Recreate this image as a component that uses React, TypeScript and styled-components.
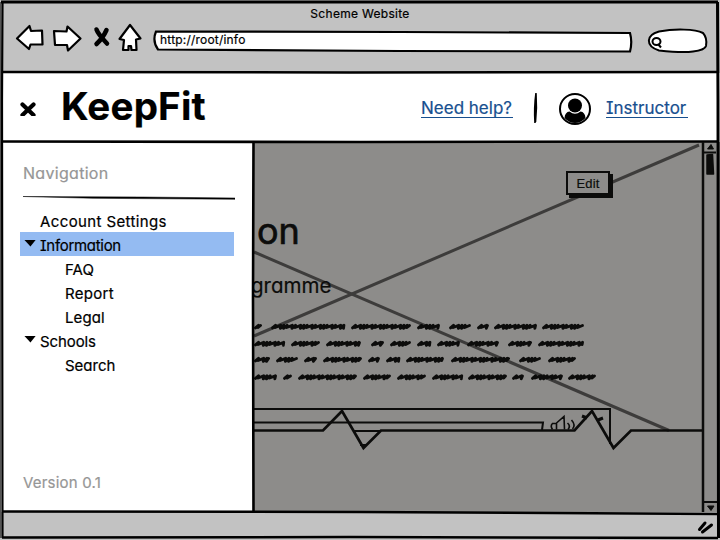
import React from "react";
import styled, { createGlobalStyle } from "styled-components";

const ink = "#000";
const dimInk = "#0c0c0b";

const GlobalStyle = createGlobalStyle`
  * { box-sizing: border-box; }
  body {
    margin: 0;
    background: #fff;
    overflow: hidden;
    font-family: Inter, "Liberation Sans", sans-serif;
    font-feature-settings: "cv11" 1, "cv08" 1;
    color: ${ink};
    -webkit-text-stroke: 0.2px currentColor;
  }
`;

const Window = styled.div`
  position: relative;
  width: 720px;
  height: 540px;
  display: flex;
  flex-direction: column;
  background: #fff;
  overflow: hidden;
`;

const Outline = styled.svg`
  position: absolute;
  inset: 0;
  pointer-events: none;
`;

const Chrome = styled.header`
  height: 73px;
  padding: 6px 3px 0;
  background: #c2c2c2;
`;

const Title = styled.div`
  height: 16px;
  line-height: 16px;
  font-size: 12px;
  letter-spacing: 0.3px;
  text-align: center;
`;

const Controls = styled.div`
  display: flex;
  height: 36px;
  padding-left: 9px;
`;

const Address = styled.div`
  position: relative;
  width: 482px;
  height: 26px;
  margin: 5px 0 0 4px;
`;

const Url = styled.span`
  position: relative;
  display: block;
  padding-left: 8px;
  line-height: 26px;
  font-size: 12px;
  letter-spacing: 0.2px;
`;

const SearchField = styled.svg`
  margin: 5px 0 0 11px;
`;

const AppBar = styled.div`
  height: 69px;
  padding: 0 32px 0 20px;
  display: flex;
  align-items: center;
  background: #fff;
`;

const Logo = styled.h1`
  margin: -3px auto 0 24px;
  line-height: 50px;
  font-size: 38.5px;
  font-weight: 700;
  letter-spacing: 0.2px;
`;

const Link = styled.a<{ $width: number }>`
  width: ${(p) => p.$width}px;
  height: 20px;
  line-height: 20px;
  border-bottom: 1px solid #174f8f;
  color: #174f8f;
  font-size: 17px;
  white-space: nowrap;
`;

const Divider = styled.svg`
  margin: 0 18px 0 17px;
`;

const Avatar = styled.svg`
  margin: 2px 15px 0 0;
`;

const Main = styled.div`
  display: flex;
  height: 370px;
`;

const Drawer = styled.nav`
  width: 254px;
  padding: 19px 19px 0 20px;
  display: flex;
  flex-direction: column;
  background: #fff;
`;

const Muted = styled.div<{ $size: number; $spacing: number }>`
  padding-left: 3px;
  height: 24px;
  line-height: 24px;
  font-size: ${(p) => p.$size}px;
  letter-spacing: ${(p) => p.$spacing}px;
  color: #969696;
`;

const Rule = styled.svg`
  margin: 11px 0 8px 3px;
`;

const NavRow = styled.div<{ $child?: boolean; $active?: boolean; $spacing?: number }>`
  height: 24px;
  width: 214px;
  display: flex;
  align-items: center;
  padding-top: 2px;
  padding-left: ${(p) => (p.$child ? 45 : 4)}px;
  background: ${(p) => (p.$active ? "#94bbf2" : "transparent")};
  font-size: 15px;
  letter-spacing: ${(p) => p.$spacing ?? 0}px;
`;

const Caret = styled.span<{ $hidden?: boolean }>`
  width: 12px;
  height: 7px;
  margin: -4px 4px 0 0;
  background: ${(p) => (p.$hidden ? "transparent" : ink)};
  clip-path: polygon(0 0, 100% 0, 54% 100%);
`;

const DrawerFoot = styled.footer`
  margin: auto 0 17px;
`;

const Canvas = styled.main`
  position: relative;
  width: 450px;
  background: #8d8c8a;
  overflow: hidden;
  color: ${dimInk};
`;

const Sketch = styled.svg`
  position: absolute;
  left: 0;
  top: 0;
`;

const CanvasContent = styled.div`
  position: relative;
  display: flex;
  flex-direction: column;
`;

const EditButton = styled.button`
  align-self: flex-end;
  width: 44px;
  height: 24px;
  margin: 29px 94px 0 0;
  padding: 0;
  border: 2px solid ${dimInk};
  background: #8d8c8a;
  box-shadow: 3px 3px 0 ${dimInk};
  color: ${dimInk};
  font: 13px "Liberation Sans", sans-serif;
  letter-spacing: 0.2px;
`;

const Heading = styled.h2`
  margin: 8px 0 0 3px;
  height: 56px;
  line-height: 56px;
  font-size: 36px;
  font-weight: 400;
  -webkit-text-stroke: 0.7px currentColor;
`;

const SubHeading = styled.h3`
  margin: 13px 0 0 -3px;
  height: 28px;
  line-height: 28px;
  font-size: 20.5px;
  font-weight: 400;
`;

const ScrollBar = styled.div`
  width: 16px;
  background: #8d8c8a;
`;

const Status = styled.footer`
  height: 28px;
  padding: 7px 4px 0;
  display: flex;
  justify-content: flex-end;
  background: #c2c2c2;
`;

/* Start and end of each scribbled word, one list per line of copy. */
const scribbles: { y: number; words: [number, number][] }[] = [
  { y: 184.5, words: [[0, 8], [17, 91], [97, 157], [163, 186], [195, 217], [223, 235], [240, 283], [288, 330]] },
  { y: 201.5, words: [[0, 31], [37, 66], [72, 107], [117, 130], [136, 157], [163, 177], [183, 206], [213, 245], [254, 278], [284, 330]] },
  { y: 217.5, words: [[0, 16], [22, 44], [50, 63], [69, 108], [114, 126], [132, 146], [152, 190], [197, 256], [265, 287], [294, 322]] },
  { y: 235, words: [[0, 23], [29, 38], [44, 103], [109, 137], [143, 172], [178, 209], [214, 253], [258, 270], [277, 309], [314, 342]] },
];

function scribble(y: number, from: number, to: number, seed: number) {
  let d = `M${from + 1.5} ${y + 1.4}`;
  let x = from + 2.5;
  let i = seed;
  while (x < to - 3) {
    const long = (i * 7 + seed * 3) % 5 < 2;
    const step = long ? 5.2 : 3.2;
    d += `L${x + 2} ${y - 1.2}L${x + 1.6} ${y + (long ? 1 : 1.8)}`;
    x += step;
    i += 1;
  }
  return d + `L${to - 1.5} ${y - 1}`;
}

const navItems = [
  { label: "Account Settings", caret: false, spacing: 0.38 },
  { label: "Information", caret: true, active: true, spacing: -0.3 },
  { label: "FAQ", child: true, spacing: 0.1 },
  { label: "Report", child: true, spacing: 0.3 },
  { label: "Legal", child: true, spacing: 0.1 },
  { label: "Schools", caret: true, spacing: -0.1 },
  { label: "Search", child: true },
];

function BrowserButtons() {
  return (
    <svg width="136" height="36" viewBox="12 21 136 36" fill="#fff" stroke={ink} strokeWidth="2.2" strokeLinejoin="round" strokeLinecap="round">
      <path d="M17 37.500 29.500 25 31 30 42 29.500 42.500 43.500 30.500 43.500 29 48Z" />
      <path d="M54 30 66.500 30.500 67.500 25.500 80.500 37.500 68 49.500 67 44 55 44Z" />
      <path d="M96.500 28.500Q98 33 107 42.500M106.500 29Q103 37 96.500 43" fill="none" strokeWidth="4.500" />
      <path d="M130 24 140.500 37.500 136 38.500 136.500 49 131.500 49 131 45 128.500 45 128.500 49 123 49 124 39 119.500 38Z" />
    </svg>
  );
}

function Content() {
  return (
    <Canvas>
      <Sketch width="450" height="370" viewBox="0 0 450 370" fill="none">
        <g stroke="#3d3c3b" strokeWidth="3">
          <path d="M0 110 415 288.500" />
          <path d="M0 194 445 3" />
        </g>
        <g stroke={dimInk} strokeWidth="2.900" strokeLinejoin="round" strokeLinecap="round">
          {scribbles.map((line) =>
            line.words.map(([a, b], i) => <path key={`${line.y}-${a}`} d={scribble(line.y, a, b, i + 2)} />)
          )}
        </g>
        <g stroke={dimInk} strokeWidth="2">
          <path d="M0 267H357M356 266V302" />
          <path d="M0 280.500H289L288 288" />
          <path
            d="M298.500 287.500Q296 284 298.500 281.500H302.500V287.500M302.500 281 310 274.500 310.500 287.500M313.500 281Q317 284 314 287.500M317.500 278Q322 283 318.500 287"
            strokeWidth="1.600"
          />
          <path d="M328 274 333 276M344 278 349 276" strokeWidth="3" />
        </g>
        <path
          d="M0 288.500H69L88 269 109.500 306 127 288.500H320.500L338 269 359.500 306 377 288.500H448"
          stroke={dimInk}
          strokeWidth="2.700"
        />
        <path d="M99 289H127M106 303H113" stroke={dimInk} strokeWidth="2" />
      </Sketch>
      <CanvasContent>
        <EditButton>Edit</EditButton>
        <Heading>on</Heading>
        <SubHeading>gramme</SubHeading>
      </CanvasContent>
    </Canvas>
  );
}

export default function App() {
  return (
    <>
      <GlobalStyle />
      <Window>
        <Chrome>
          <Title>Scheme Website</Title>
          <Controls>
            <BrowserButtons />
            <Address>
              <Outline width="482" height="26" viewBox="152 27 482 26">
                <path d="M156 31.500 400 32 630 33Q632.500 42 630 51.500L400 51 158 49.500Q152 41 156 31.500Z" fill="#fff" stroke={ink} strokeWidth="2.200" />
              </Outline>
              <Url>http://root/info</Url>
            </Address>
            <SearchField width="64" height="28" viewBox="645 27 64 28" fill="none" stroke={ink} strokeWidth="2">
              <path d="M659 31.500C675 28.500 695 29 703 33Q707.500 38 706 46Q705 50 693 51.500C683 53 673 52 659 50.500C645 46 646 35 659 31.500Z" fill="#fff" />
              <ellipse cx="656.500" cy="41.500" rx="4" ry="3.500" />
              <path d="M658 44 661 47.500" />
            </SearchField>
          </Controls>
        </Chrome>

        <AppBar>
          <svg width="17" height="16" viewBox="20 100 17 16" stroke={ink} strokeWidth="4.200" strokeLinecap="round">
            <path d="M22.500 104.500 33.500 115M33.500 104.500 22.500 115" />
          </svg>
          <Logo>KeepFit</Logo>
          <Link $width={92}>Need help?</Link>
          <Divider width="11" height="34" viewBox="530 92 11 34" fill="none" stroke={ink}>
            <path d="M536 94Q534 108 535 124M536 95Q537 108 535.500 123" strokeWidth="1.600" />
          </Divider>
          <Avatar width="32" height="32" viewBox="0 0 32 32">
            <circle cx="16" cy="16" r="15" fill="#fff" stroke={ink} strokeWidth="2" />
            <circle cx="16" cy="12.500" r="7" />
            <path d="M5.500 25Q6 19 10.500 18.500Q16 23 21.500 18.500Q26 19 26.500 25Q22 30 16 30T5.500 25Z" />
          </Avatar>
          <Link $width={82}>Instructor</Link>
        </AppBar>

        <Main>
          <Drawer>
            <Muted $size={16} $spacing={0.3}>Navigation</Muted>
            <Rule width="212" height="4" viewBox="0 0 212 4">
              <path d="M0 .5 120 1 212 2V3.300L70 2.300Z" stroke={ink} strokeWidth=".5" />
            </Rule>
            {navItems.map((item) => (
              <NavRow key={item.label} $child={item.child} $active={item.active} $spacing={item.spacing}>
                {!item.child && <Caret $hidden={!item.caret} />}
                {item.label}
              </NavRow>
            ))}
            <DrawerFoot>
              <Muted $size={15} $spacing={0.2}>Version 0.1</Muted>
            </DrawerFoot>
          </Drawer>
          <Content />
          <ScrollBar>
            <svg width="16" height="370" viewBox="704 142 16 370" stroke={dimInk} fill={dimInk}>
              <path d="M703 152.500H716M703 502H717" strokeWidth="2" />
              <path d="M707.500 149 711 144.500 713.500 149ZM707.500 506H714L711 510.500Z" />
              <path d="M707 155 712.500 154.500 713.500 174H707Z" strokeWidth="1.500" strokeLinejoin="round" />
            </svg>
          </ScrollBar>
        </Main>

        <Status>
          <svg width="20" height="16" viewBox="697 519 20 16" stroke={ink} strokeWidth="3" strokeLinecap="round">
            <path d="M700.500 529.500 706 523M703.500 532 712.500 525" />
          </svg>
        </Status>

        <Outline width="720" height="540" viewBox="0 0 720 540" fill="none" stroke={ink}>
          <path d="M1 2H718" strokeWidth="3" />
          <path d="M.5 2V538" stroke="#555" />
          <path d="M2.500 2 2 100 2.500 538" strokeWidth="2.200" />
          <path d="M717.500 2 718 100 718.500 538" strokeWidth="3" />
          <path d="M2 537.500 350 537 718 538" strokeWidth="2.500" />
          <path d="M2 72 350 72.500 718 72" strokeWidth="2.500" />
          <path d="M2 141.500 360 142 718 141.500" strokeWidth="2.600" />
          <path d="M253.500 141 253 300 253.500 512" strokeWidth="2.600" />
          <path d="M703 142V512" stroke={dimInk} strokeWidth="2.500" />
          <path d="M2 511.500 360 512 718 514" strokeWidth="2.500" />
        </Outline>
      </Window>
    </>
  );
}
